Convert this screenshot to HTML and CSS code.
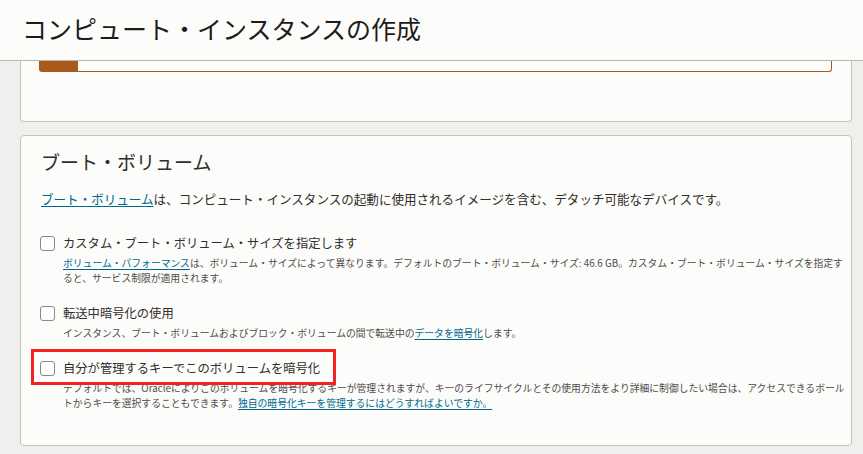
FILE: index.html
```html
<!DOCTYPE html>
<html lang="ja">
<head>
    <meta charset="UTF-8">
    <meta name="viewport" content="width=device-width, initial-scale=1.0">
    <title>コンピュート・インスタンスの作成</title>
    <link rel="stylesheet" href="styles.css">
</head>
<body>
    <header class="page-header">
        <h1>コンピュート・インスタンスの作成</h1>
    </header>
    <main class="content">
        <section class="card card-prev">
            <div class="notice">
                <span class="notice-mark"></span>
            </div>
        </section>
        <section class="card">
            <h2>ブート・ボリューム</h2>
            <p class="intro"><a href="#">ブート・ボリューム</a>は、コンピュート・インスタンスの起動に使用されるイメージを含む、デタッチ可能なデバイスです。</p>

            <div class="option option-first">
                <label class="option-row">
                    <span class="checkbox"></span>
                    <span class="option-label">カスタム・ブート・ボリューム・サイズを指定します</span>
                </label>
                <div class="option-help"><a href="#">ボリューム・パフォーマンス</a>は、ボリューム・サイズによって異なります。デフォルトのブート・ボリューム・サイズ: 46.6 GB。カスタム・ブート・ボリューム・サイズを指定すると、サービス制限が適用されます。</div>
            </div>

            <div class="option">
                <label class="option-row">
                    <span class="checkbox"></span>
                    <span class="option-label">転送中暗号化の使用</span>
                </label>
                <div class="option-help">インスタンス、ブート・ボリュームおよびブロック・ボリュームの間で転送中の<a href="#">データを暗号化</a>します。</div>
            </div>

            <div class="option">
                <label class="option-row">
                    <span class="checkbox"></span>
                    <span class="option-label">自分が管理するキーでこのボリュームを暗号化</span>
                    <span class="highlight"></span>
                </label>
                <div class="option-help">デフォルトでは、Oracleによりこのボリュームを暗号化するキーが管理されますが、キーのライフサイクルとその使用方法をより詳細に制御したい場合は、アクセスできるボールトからキーを選択することもできます。<a href="#">独自の暗号化キーを管理するにはどうすればよいですか。</a></div>
            </div>
        </section>
    </main>
</body>
</html>
```

FILE: styles.css
```css
body {
    margin: 0;
    padding: 0;
    background-color: #f1efed;
    color: #312d2a;
    font-family: "Noto Sans CJK JP", "Noto Sans", sans-serif;
}
.page-header {
    height: 60px;
    background: #fcfcfb;
    border-bottom: 1px solid #b9b5b1;
    box-sizing: content-box;
}
.page-header h1 {
    margin: 0;
    padding: 13px 0 0 22px;
    font-size: 25px;
    font-weight: 400;
    line-height: 30px;
    color: #1e1b19;
}
.content {
    padding: 0 11px 0 20px;
}
.card {
    background: #fcfcfb;
    border: 1px solid #c5c1bd;
    border-radius: 4px;
    padding: 12px 4px 34px 20px;
}
.card-prev {
    height: 61px;
    padding: 0 19px 0 18px;
    border-top: none;
    border-radius: 0 0 4px 4px;
    box-sizing: border-box;
}
.card-prev + .card {
    margin-top: 13px;
}
.notice {
    height: 10px;
    border: 1px solid #aa5a1c;
    border-top: none;
    border-radius: 0 0 3px 3px;
    display: flex;
}
.notice-mark {
    width: 38px;
    background: #aa5a1c;
}
h2 {
    margin: 0;
    font-size: 19px;
    font-weight: 400;
    line-height: 28px;
}
.intro {
    margin: 13px 0 0;
    font-size: 12.55px;
    line-height: 20px;
}
a {
    color: #00688c;
    text-decoration: underline;
    text-underline-offset: 2px;
}
.option {
    margin-top: 17px;
}
.option-first {
    margin-top: 24px;
}
.option-row {
    position: relative;
    display: flex;
    align-items: center;
    height: 20px;
}
.checkbox {
    width: 13px;
    height: 13px;
    border: 1px solid #8c8885;
    border-radius: 3px;
    background: #fff;
    margin-left: -1px;
    margin-right: 8px;
}
.option-label {
    font-size: 12.3px;
    line-height: 20px;
}
.option-help {
    margin: 3px 0 0 22px;
    font-size: 9.8px;
    line-height: 15px;
    color: #4f4b48;
}
.highlight {
    position: absolute;
    left: -10px;
    top: -9px;
    width: 305px;
    height: 36px;
    border: 3px solid #f52020;
    box-sizing: border-box;
}
```
